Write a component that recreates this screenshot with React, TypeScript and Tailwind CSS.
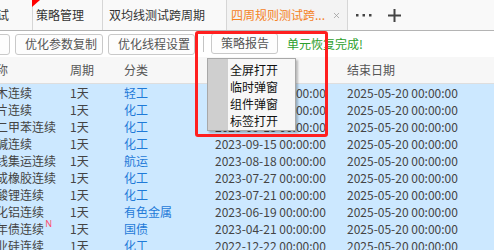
import { X } from "lucide-react";

const ROWS = [
  { name: "原木连续", cat: "轻工", start: "2023-10-16 00:00:00" },
  { name: "瓶片连续", cat: "化工", start: "2023-10-16 00:00:00" },
  { name: "对二甲苯连续", cat: "化工", start: "2023-09-15 00:00:00" },
  { name: "烧碱连续", cat: "化工", start: "2023-09-15 00:00:00" },
  { name: "欧线集运连续", cat: "航运", start: "2023-08-18 00:00:00" },
  { name: "合成橡胶连续", cat: "化工", start: "2023-07-27 00:00:00" },
  { name: "碳酸锂连续", cat: "化工", start: "2023-07-21 00:00:00" },
  { name: "氧化铝连续", cat: "有色金属", start: "2023-06-19 00:00:00" },
  { name: "十年债连续", cat: "国债", start: "2023-04-21 00:00:00", isNew: true },
  { name: "工业硅连续", cat: "化工", start: "2022-12-22 00:00:00" },
];

const MENU = ["全屏打开", "临时弹窗", "组件弹窗", "标签打开"];

const FONT = "font-['Microsoft_YaHei','Noto_Sans_CJK_SC','Noto_Sans',sans-serif]";

function ToolButton({ label, className = "" }: { label: string; className?: string }) {
  return (
    <button
      className={`h-[21px] px-[9px] border border-[#c9c9c9] rounded-[3px] bg-[#fdfdfd] text-[12px] text-[#555] leading-none whitespace-nowrap ${className}`}
    >
      {label}
    </button>
  );
}

export default function App() {
  return (
    <div className={`relative w-[494px] h-[250px] overflow-hidden bg-white text-[12px] ${FONT}`}>
      {/* tab bar */}
      <div className="flex h-[31px] bg-[#f9f9f9] border-b border-[#b4b4b4]">
        <div className="w-[33px] flex items-center border-r border-[#d6d6d6] overflow-hidden">
          <span className="ml-[-3px] text-[#333]">试</span>
        </div>
        <div className="relative w-[70px] flex items-center pl-[3px] border-r border-[#d6d6d6] text-[#333]">
          <div className="absolute left-[-1px] top-0 w-0 h-0 border-t-[7px] border-t-[#f00] border-r-[8px] border-r-transparent" />
          策略管理
        </div>
        <div className="w-[124px] flex items-center pl-[6px] border-r border-[#d6d6d6] text-[#333]">
          双均线测试跨周期
        </div>
        <div className="w-[121px] flex items-center pl-[4px] bg-[#f3f3f3] border-r border-[#d6d6d6] text-[#f5821f]">
          <span className="flex-1">四周规则测试跨...</span>
          <X className="w-[9px] h-[9px] mr-[6px] text-[#999]" strokeWidth={2} />
        </div>
        <div className="flex items-center pl-[8px] gap-[16px]">
          <svg width="16" height="3" viewBox="0 0 16 3">
            <rect x="0" y="0" width="2.5" height="2.5" fill="#444" />
            <rect x="6.5" y="0" width="2.5" height="2.5" fill="#444" />
            <rect x="13" y="0" width="2.5" height="2.5" fill="#444" />
          </svg>
          <svg width="13" height="13" viewBox="0 0 13 13">
            <path d="M6.5 0v13M0 6.5h13" stroke="#444" strokeWidth="2" />
          </svg>
        </div>
      </div>

      {/* toolbar */}
      <div className="flex items-center h-[26px] gap-[5px]">
        <ToolButton label="" className="w-[16px] ml-[-10px]" />
        <ToolButton label="优化参数复制" className="w-[88px]" />
        <ToolButton label="优化线程设置" className="w-[87px]" />
        <div className="w-px h-[16px] bg-[#c4c4c4] mx-[3px]" />
        <ToolButton label="策略报告" className="w-[67px] ml-[-1px] mt-[-2px]" />
        <span className="ml-[4px] text-[#2ca02c]">单元恢复完成!</span>
      </div>

      {/* table header */}
      <div className="flex items-center h-[27px] bg-[#f7f7f7] border-b border-[#dedede] text-[#555]">
        <div className="w-[70px] overflow-hidden"><span className="ml-[-16px] block">名称</span></div>
        <div className="w-[54px]">周期</div>
        <div className="w-[91px]">分类</div>
        <div className="w-[132px]">起始日期</div>
        <div>结束日期</div>
      </div>

      {/* rows */}
      <div className="flex flex-col bg-[#cce8ff]">
        {ROWS.map((r, i) => (
          <div key={i} className="flex items-center h-[17px] text-[#444] whitespace-nowrap">
            <div className="w-[70px] overflow-hidden">
              <span className="relative ml-[-16px] inline-block">
                {r.name}
                {r.isNew && (
                  <span className="absolute right-[-8px] top-[-3px] text-[9px] text-[#ff4d6d] font-['Noto_Sans',sans-serif]">N</span>
                )}
              </span>
            </div>
            <div className="w-[54px]">1天</div>
            <div className="w-[91px] text-[#1f7ad8]">{r.cat}</div>
            <div className="w-[132px]">{r.start}</div>
            <div>2025-05-20 00:00:00</div>
          </div>
        ))}
      </div>

      {/* dropdown menu */}
      <div className="absolute left-[207px] top-[58px] w-[89px] flex bg-[#f7f7f7] border border-[#a8a8a8] shadow-[2px_2px_2px_rgba(0,0,0,0.25)]">
        <div className="w-[20px] bg-[#c8c8c8]/85" />
        <div className="flex-1 flex flex-col pt-[2px] pb-[1px] pl-[2px] bg-[#f7f7f7]">
          {MENU.map((m) => (
            <div key={m} className="h-[17px] flex items-center text-[#111]">{m}</div>
          ))}
        </div>
      </div>

      {/* red highlight */}
      <div className="absolute left-[195px] top-[31px] w-[133px] h-[106px] border-[3px] border-[#ff1f1f] rounded-[3px]" />
    </div>
  );
}
